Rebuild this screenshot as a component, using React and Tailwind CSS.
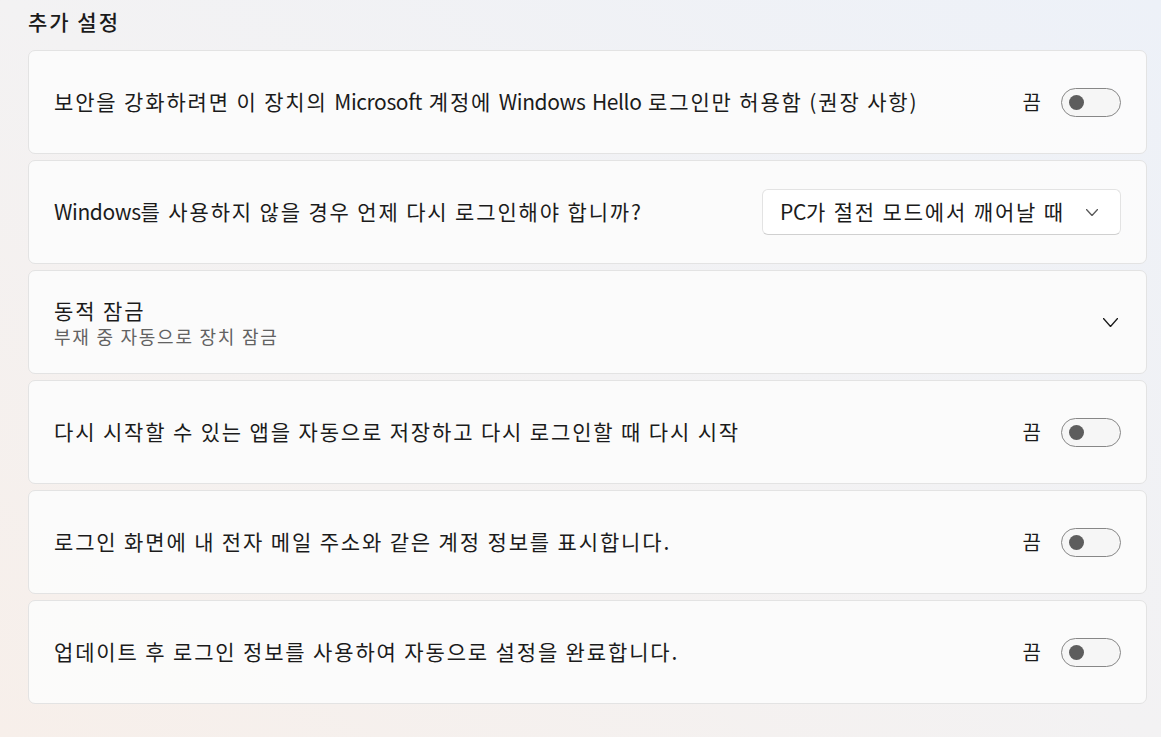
const font = { fontFamily: '"Noto Sans CJK KR", "Noto Sans", sans-serif' };

// Hangul runs need extra tracking to match the wider system font; Latin runs don't
const Label = ({ text, className }) => (
  <span className={className}>
    {text.split(/([A-Za-z]+)/).map((part, i) =>
      /^[A-Za-z]+$/.test(part) ? (
        <span key={i} className="tracking-[-0.4px]">{part}</span>
      ) : (
        <span key={i}>{part}</span>
      )
    )}
  </span>
);

const Toggle = () => (
  <div className="flex items-center gap-[20px]">
    <span className="text-[20px] text-[#1b1b1b]">끔</span>
    <div className="w-[60px] h-[29px] rounded-full border-[1.5px] border-[#878787] bg-[#f6f6f6] flex items-center pl-[7px]">
      <div className="w-[15px] h-[15px] rounded-full bg-[#5d5d5d]" />
    </div>
  </div>
);

const Chevron = ({ w, h, color }) => (
  <svg width={w} height={h} viewBox={`0 0 ${w} ${h}`} fill="none">
    <polyline points={`0.5,0.5 ${w / 2},${h - 0.5} ${w - 0.5},0.5`} stroke={color} strokeWidth="1.3" strokeLinecap="round" strokeLinejoin="round" />
  </svg>
);

const Card = ({ children }) => (
  <div className="h-[104px] rounded-[7px] border border-[#e3e3e3] bg-[#fcfcfc]/90 flex items-center justify-between pl-[25px] pr-[25px]">
    {children}
  </div>
);

const rows = [
  { kind: 'toggle', text: '보안을 강화하려면 이 장치의 Microsoft 계정에 Windows Hello 로그인만 허용함 (권장 사항)' },
  { kind: 'select', text: 'Windows를 사용하지 않을 경우 언제 다시 로그인해야 합니까?' },
  { kind: 'expand', text: '동적 잠금', sub: '부재 중 자동으로 장치 잠금' },
  { kind: 'toggle', text: '다시 시작할 수 있는 앱을 자동으로 저장하고 다시 로그인할 때 다시 시작' },
  { kind: 'toggle', text: '로그인 화면에 내 전자 메일 주소와 같은 계정 정보를 표시합니다.' },
  { kind: 'toggle', text: '업데이트 후 로그인 정보를 사용하여 자동으로 설정을 완료합니다.' },
];

export default function App() {
  return (
    <div
      style={font}
      className="w-[1161px] h-[737px] overflow-hidden bg-gradient-to-tr from-[#f7efea] via-[#f3f2f3] to-[#edf1f8] pl-[28px] pr-[14px]"
    >
      <h2 className="h-[50px] pt-[6px] text-[21px] font-medium tracking-[2px] text-[#1b1b1b] leading-[30px]">추가 설정</h2>
      <div className="flex flex-col gap-[6px]">
        {rows.map((row, i) => (
          <Card key={i}>
            {row.kind === 'expand' ? (
              <div className="flex flex-col">
                <Label text={row.text} className="text-[21px] tracking-[1.9px] leading-[27px] text-[#1b1b1b]" />
                <Label text={row.sub} className="text-[18px] tracking-[1.75px] leading-[24px] text-[#626262]" />
              </div>
            ) : (
              <Label text={row.text} className="text-[21px] tracking-[1.85px] text-[#1b1b1b]" />
            )}
            {row.kind === 'toggle' && <Toggle />}
            {row.kind === 'select' && (
              <div className="w-[359px] h-[46px] rounded-[6px] border border-[#e3e3e3] border-b-[#d0d0d0] bg-white flex items-center justify-between pl-[17px] pr-[22px]">
                <Label text="PC가 절전 모드에서 깨어날 때" className="text-[21px] tracking-[1.85px] text-[#1b1b1b]" />
                <Chevron w={12} h={7} color="#5a5a5a" />
              </div>
            )}
            {row.kind === 'expand' && (
              <div className="mr-[3px]">
                <Chevron w={15} h={9} color="#1b1b1b" />
              </div>
            )}
          </Card>
        ))}
      </div>
    </div>
  );
}
